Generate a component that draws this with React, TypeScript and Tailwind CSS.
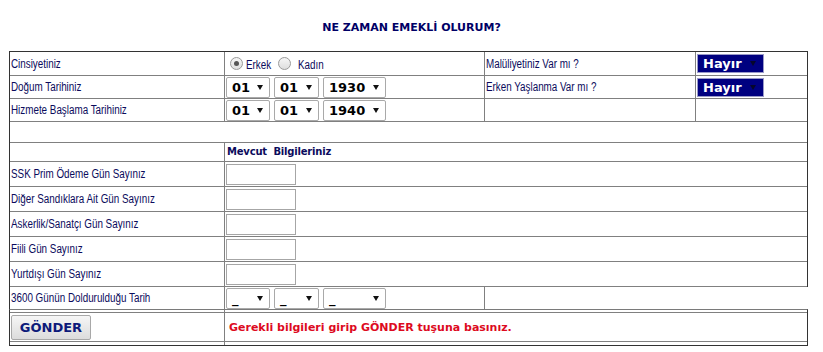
import React from "react";

const LBL =
  "inline-block origin-left scale-x-[0.82] font-['Liberation_Sans',sans-serif] text-[12px] text-[#0b0b5c] leading-none whitespace-nowrap";

function Arrow({ color }: { color: string }) {
  return (
    <svg width="6" height="5" viewBox="0 0 6 5" className="shrink-0">
      <polygon points="0,0 6,0 3,5" fill={color} />
    </svg>
  );
}

function NumSel({ w, text }: { w: string; text: string }) {
  return (
    <div
      className={`${w} h-[21px] border border-[#a9a9a9] rounded-[2px] bg-white flex items-center justify-between pl-[5px] pr-[6px]`}
    >
      <span className="font-['DejaVu_Sans',sans-serif] font-bold text-[13px] text-black leading-none">
        {text}
      </span>
      <Arrow color="#111111" />
    </div>
  );
}

function DateSels({ a, b, c }: { a: string; b: string; c: string }) {
  return (
    <div className="flex gap-[4px]">
      <NumSel w="w-[44px]" text={a} />
      <NumSel w="w-[45px]" text={b} />
      <NumSel w="w-[63px]" text={c} />
    </div>
  );
}

function Hayir() {
  return (
    <div className="w-[67px] h-[19px] bg-[#000080] border border-[#9a9ac8] flex items-center justify-between pl-[5px] pr-[7px]">
      <span className="font-['DejaVu_Sans',sans-serif] font-bold text-[13px] text-white leading-none">
        Hayır
      </span>
      <Arrow color="#06062a" />
    </div>
  );
}

function Radio({ checked }: { checked?: boolean }) {
  return (
    <span className="w-[13px] h-[13px] rounded-full border border-[#9a9a9a] bg-linear-to-b from-[#f6f6f6] to-[#dedede] flex items-center justify-center shrink-0">
      {checked ? <span className="w-[5px] h-[5px] rounded-full bg-[#555555]" /> : null}
    </span>
  );
}

function Input() {
  return <div className="w-[70px] h-[21px] border border-[#a6a6a6] bg-white" />;
}

function InputRow({ label }: { label: string }) {
  return (
    <div className="flex h-[25px] border-b border-[#808080]">
      <div className="w-[215px] border-r border-[#808080] flex items-center pl-[1px]">
        <span className={LBL}>{label}</span>
      </div>
      <div className="flex-1 flex items-center pl-[1px]">
        <Input />
      </div>
    </div>
  );
}

export default function App() {
  return (
    <div className="w-[823px] h-[352px] bg-white">
      <div className="h-[51px] flex justify-center pt-[21px]">
        <span className="font-['DejaVu_Sans',sans-serif] font-bold text-[11px] leading-[13px] text-[#000066]">
          NE ZAMAN EMEKLİ OLURUM?
        </span>
      </div>

      {/* main table */}
      <div className="ml-[9px] w-[799px] border-t border-l border-r border-[#333333]">
        {/* row 1 */}
        <div className="flex h-[24px] border-b border-[#808080]">
          <div className="w-[215px] border-r border-[#808080] flex items-center pl-[1px]">
            <span className={LBL}>Cinsiyetiniz</span>
          </div>
          <div className="w-[260px] border-r border-[#808080] flex items-center pl-[5px]">
            <Radio checked />
            <span className="w-[26px] shrink-0 ml-[3px] mt-[3px] flex">
              <span className={LBL}>Erkek</span>
            </span>
            <span className="ml-[6px]">
              <Radio />
            </span>
            <span className="w-[28px] shrink-0 ml-[7px] mt-[3px] flex">
              <span className={LBL}>Kadın</span>
            </span>
          </div>
          <div className="w-[211px] border-r border-[#808080] flex items-center pl-[1px]">
            <span className={LBL}>Malüliyetiniz Var mı ?</span>
          </div>
          <div className="flex-1 flex items-center pl-[1px]">
            <Hayir />
          </div>
        </div>

        {/* row 2 */}
        <div className="flex h-[23px] border-b border-[#808080]">
          <div className="w-[215px] border-r border-[#808080] flex items-center pl-[1px]">
            <span className={LBL}>Doğum Tarihiniz</span>
          </div>
          <div className="w-[260px] border-r border-[#808080] flex items-center pl-[1px]">
            <DateSels a="01" b="01" c="1930" />
          </div>
          <div className="w-[211px] border-r border-[#808080] flex items-center pl-[1px]">
            <span className={LBL}>Erken Yaşlanma Var mı ?</span>
          </div>
          <div className="flex-1 flex items-center pl-[1px]">
            <Hayir />
          </div>
        </div>

        {/* row 3 */}
        <div className="flex h-[23px] border-b border-[#808080]">
          <div className="w-[215px] border-r border-[#808080] flex items-center pl-[1px]">
            <span className={LBL}>Hizmete Başlama Tarihiniz</span>
          </div>
          <div className="w-[260px] border-r border-[#808080] flex items-center pl-[1px]">
            <DateSels a="01" b="01" c="1940" />
          </div>
          <div className="w-[211px] border-r border-[#808080]" />
          <div className="flex-1" />
        </div>

        {/* row 4 empty */}
        <div className="h-[21px] border-b border-[#808080]" />

        {/* row 5 */}
        <div className="flex h-[19px] border-b border-[#808080]">
          <div className="w-[215px] border-r border-[#808080]" />
          <div className="flex-1 flex items-center pl-[2px]">
            <span className="font-['DejaVu_Sans',sans-serif] font-bold text-[10px] leading-none text-[#0b0b5c] whitespace-pre tracking-[-0.2px]">
              Mevcut  Bilgileriniz
            </span>
          </div>
        </div>

        <InputRow label="SSK Prim Ödeme Gün Sayınız" />
        <InputRow label="Diğer Sandıklara Ait Gün Sayınız" />
        <InputRow label="Askerlik/Sanatçı Gün Sayınız" />
        <InputRow label="Fiili Gün Sayınız" />
        <InputRow label="Yurtdışı Gün Sayınız" />
      </div>

      {/* 3600 row */}
      <div className="ml-[9px] w-[799px] flex h-[22px] border-l border-[#333333]">
        <div className="w-[215px] border-r border-[#808080] flex items-center pl-[1px]">
          <span className={LBL}>3600 Günün Doldurulduğu Tarih</span>
        </div>
        <div className="w-[260px] border-r border-[#808080] flex items-center pl-[1px]">
          <DateSels a="_" b="_" c="_" />
        </div>
        <div className="flex-1" />
      </div>

      {/* submit table */}
      <div className="ml-[9px] w-[799px] flex border-t border-t-[#7a7a7a] border-l border-r border-b border-[#333333]">
        <div className="w-[215px] border-r border-[#808080] pt-[2px] pb-[3px]">
          <div className="h-[30px] border-y border-[#808080] flex items-start pt-[2px] pl-[1px]">
            <div className="w-[80px] h-[25px] border border-[#a8a8a8] rounded-[2px] bg-linear-to-b from-[#f6f6f6] to-[#dcdcdc] flex items-center justify-center">
              <span className="font-['DejaVu_Sans',sans-serif] font-bold text-[13px] leading-none text-[#0d1a7a]">
                GÖNDER
              </span>
            </div>
          </div>
        </div>
        <div className="flex-1 pt-[2px] pb-[3px]">
          <div className="h-[30px] border-y border-[#808080] flex items-center pl-[4px]">
            <span className="font-['DejaVu_Sans',sans-serif] font-bold text-[11px] leading-none text-[#dd0a1e]">
              Gerekli bilgileri girip GÖNDER tuşuna basınız.
            </span>
          </div>
        </div>
      </div>
    </div>
  );
}
